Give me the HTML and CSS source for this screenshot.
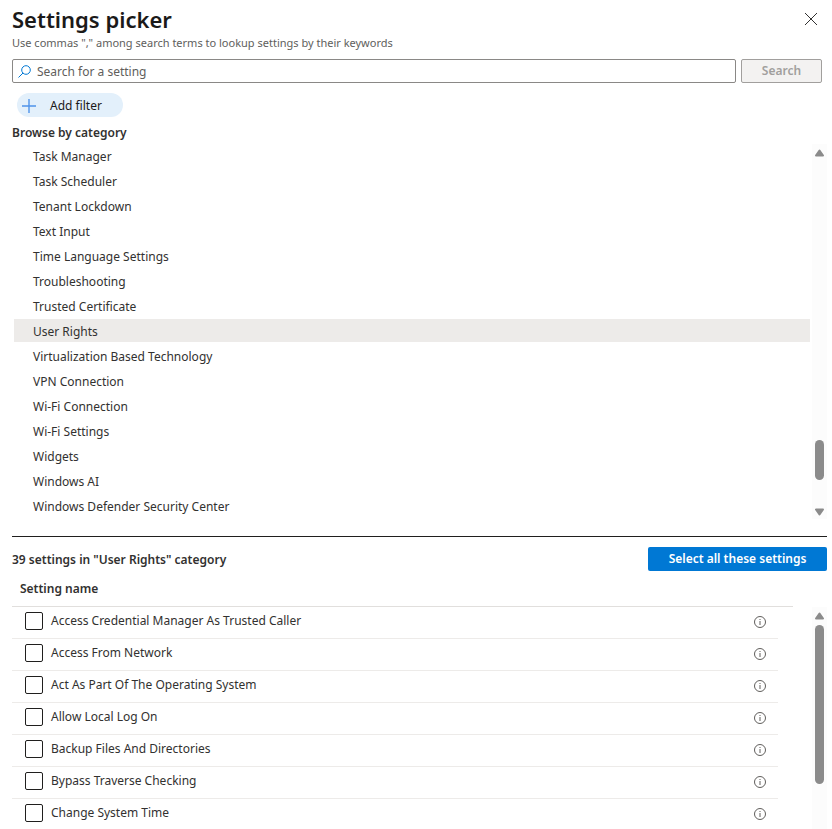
FILE: index.html
```html
<!DOCTYPE html>
<html lang="en">
    <head>
        <title>Settings picker</title>
        <meta charset="utf-8">
        <link rel="stylesheet" href="styles.css">
    </head>
    <body>
        <svg class="sprite" aria-hidden="true">
            <symbol id="info" viewBox="0 0 12 12">
                <circle cx="6" cy="6" r="5.5" fill="none" stroke="#605e5c"/>
                <path d="M5.5 3h1v1h-1zM5.5 5h1v4h-1z" fill="#605e5c"/>
            </symbol>
            <symbol id="arrow" viewBox="0 0 9 7">
                <path d="M4.5 1L8 6H1z" fill="#8b8b8b" stroke="#8b8b8b" stroke-width="2" stroke-linejoin="round"/>
            </symbol>
        </svg>
        <div class="panel">
            <header class="header">
                <h1>Settings picker</h1>
                <button class="close" type="button" aria-label="Close">
                    <svg width="12" height="12" viewBox="0 0 12 12"><path d="M0 0l12 12M12 0L0 12" stroke="#323130" fill="none"/></svg>
                </button>
            </header>
            <p class="hint">Use commas "," among search terms to lookup settings by their keywords</p>
            <form class="search">
                <label class="search-box">
                    <svg width="13" height="13" viewBox="0 0 13 13"><circle cx="8" cy="5" r="4.3"/><path d="M5 8L0.5 12.5"/></svg>
                    <input type="text" placeholder="Search for a setting" aria-label="Search for a setting">
                </label>
                <button class="search-btn" type="button" disabled>Search</button>
            </form>
            <button class="add-filter" type="button">
                <svg width="14" height="14" viewBox="0 0 14 14"><path d="M7 0v14M0 7h14" stroke="#4f93ea" stroke-width="1.4"/></svg>
                Add filter
            </button>
            <h2 class="browse">Browse by category</h2>
            <div class="categories">
                <ul>
                    <li><a href="#">Task Manager</a></li>
                    <li><a href="#">Task Scheduler</a></li>
                    <li><a href="#">Tenant Lockdown</a></li>
                    <li><a href="#">Text Input</a></li>
                    <li><a href="#">Time Language Settings</a></li>
                    <li><a href="#">Troubleshooting</a></li>
                    <li><a href="#">Trusted Certificate</a></li>
                    <li><a href="#" class="current">User Rights</a></li>
                    <li><a href="#">Virtualization Based Technology</a></li>
                    <li><a href="#">VPN Connection</a></li>
                    <li><a href="#">Wi-Fi Connection</a></li>
                    <li><a href="#">Wi-Fi Settings</a></li>
                    <li><a href="#">Widgets</a></li>
                    <li><a href="#">Windows AI</a></li>
                    <li><a href="#">Windows Defender Security Center</a></li>
                </ul>
                <div class="scrollbar">
                    <svg class="arrow"><use href="#arrow"/></svg>
                    <div class="track track-end"><div class="thumb"></div></div>
                    <svg class="arrow down"><use href="#arrow"/></svg>
                </div>
            </div>
            <div class="result-bar">
                <h2>39 settings in "User Rights" category</h2>
                <button class="select-all" type="button">Select all these settings</button>
            </div>
            <div class="results">
                <table>
                    <thead>
                        <tr><th colspan="3">Setting name</th></tr>
                    </thead>
                    <tbody>
                        <tr>
                            <td><label><input type="checkbox">Access Credential Manager As Trusted Caller</label></td>
                            <td class="info"><svg><use href="#info"/></svg></td>
                            <td class="gutter"></td>
                        </tr>
                        <tr>
                            <td><label><input type="checkbox">Access From Network</label></td>
                            <td class="info"><svg><use href="#info"/></svg></td>
                            <td class="gutter"></td>
                        </tr>
                        <tr>
                            <td><label><input type="checkbox">Act As Part Of The Operating System</label></td>
                            <td class="info"><svg><use href="#info"/></svg></td>
                            <td class="gutter"></td>
                        </tr>
                        <tr>
                            <td><label><input type="checkbox">Allow Local Log On</label></td>
                            <td class="info"><svg><use href="#info"/></svg></td>
                            <td class="gutter"></td>
                        </tr>
                        <tr>
                            <td><label><input type="checkbox">Backup Files And Directories</label></td>
                            <td class="info"><svg><use href="#info"/></svg></td>
                            <td class="gutter"></td>
                        </tr>
                        <tr>
                            <td><label><input type="checkbox">Bypass Traverse Checking</label></td>
                            <td class="info"><svg><use href="#info"/></svg></td>
                            <td class="gutter"></td>
                        </tr>
                        <tr>
                            <td><label><input type="checkbox">Change System Time</label></td>
                            <td class="info"><svg><use href="#info"/></svg></td>
                            <td class="gutter"></td>
                        </tr>
                    </tbody>
                </table>
                <div class="scrollbar">
                    <svg class="arrow"><use href="#arrow"/></svg>
                    <div class="track"><div class="thumb thumb-long"></div></div>
                </div>
            </div>
        </div>
    </body>
</html>
```

FILE: styles.css
```css
* {
    margin: 0;
    padding: 0;
    box-sizing: border-box;
}
body {
    font-family: "Segoe UI", "Noto Sans", "Open Sans", sans-serif;
    font-size: 12px;
    line-height: 20px;
    color: #323130;
    background-color: #fff;
}
button, input {
    font: inherit;
    color: inherit;
}
h2 {
    font-size: 12px;
    font-weight: 600;
}
.sprite {
    position: absolute;
    width: 0;
    height: 0;
}
.panel {
    height: 100vh;
    overflow: hidden;
    display: flex;
    flex-direction: column;
    padding: 0 5px 0 12px;
}
.header {
    display: flex;
    justify-content: space-between;
    align-items: center;
    height: 36px;
    padding: 2px 4px 0 0;
}
.header h1 {
    font-size: 22px;
    line-height: 34px;
    font-weight: 600;
    color: #1b1a19;
}
.close {
    display: flex;
    padding: 6px;
    border: none;
    background: none;
}
.hint {
    font-size: 11px;
    line-height: 14px;
    color: #605e5c;
}
/* search row */
.search {
    display: flex;
    gap: 5px;
    margin-top: 9px;
    padding-right: 5px;
}
.search-box {
    flex: 1;
    display: flex;
    align-items: center;
    gap: 6px;
    height: 24px;
    padding: 0 5px;
    border: 1px solid #8a8886;
    border-radius: 2px;
}
.search-box svg {
    fill: none;
    stroke: #0078d4;
}
.search-box input {
    flex: 1;
    padding-top: 2px;
    border: none;
    outline: none;
    background: none;
}
.search-box input::placeholder {
    color: #605e5c;
}
.search-btn {
    width: 81px;
    height: 24px;
    border: 1px solid #a19f9d;
    border-radius: 2px;
    background-color: #f3f2f1;
    color: #a19f9d;
    font-weight: 600;
}
.add-filter {
    align-self: flex-start;
    display: flex;
    align-items: center;
    gap: 14px;
    width: 106px;
    height: 24px;
    margin: 10px 0 0 5px;
    padding: 1px 0 0 5px;
    border: none;
    border-radius: 12px;
    background-color: #e3f0fb;
    color: #1b1a19;
    white-space: nowrap;
}
.browse {
    margin: 6px 0 1px;
}
/* category list */
.categories {
    display: flex;
    gap: 2px;
    padding: 0 0 17px 2px;
    border-bottom: 1px solid #201f1e;
}
.categories ul {
    flex: 1;
    list-style: none;
}
.categories a {
    display: block;
    height: 23px;
    line-height: 26px;
    margin-bottom: 2px;
    padding-left: 19px;
    color: inherit;
    text-decoration: none;
}
.categories .current {
    background-color: #edebe9;
}
.scrollbar {
    display: flex;
    flex-direction: column;
    align-items: center;
    width: 15px;
    padding: 5px 0 3px;
    background-color: #fcfcfc;
}
.arrow {
    flex: none;
    width: 9px;
    height: 8px;
}
.down {
    transform: rotate(180deg);
}
.track {
    flex: 1;
    display: flex;
    flex-direction: column;
    padding-top: 5px;
}
.track-end {
    justify-content: flex-end;
    padding-bottom: 28px;
}
.thumb {
    width: 9px;
    height: 40px;
    border-radius: 5px;
    background-color: #8b8b8b;
}
.thumb-long {
    height: 159px;
}
/* settings of the chosen category */
.result-bar {
    display: flex;
    justify-content: space-between;
    align-items: center;
    margin-top: 10px;
}
.result-bar h2 {
    padding-top: 2px;
}
.select-all {
    width: 179px;
    height: 24px;
    border: none;
    border-radius: 2px;
    background-color: #0078d4;
    color: #fff;
    font-weight: 600;
}
.results {
    flex: 1;
    min-height: 0;
    display: flex;
    align-items: flex-start;
    gap: 19px;
}
.results table {
    flex: 1;
    border-collapse: separate;
    border-spacing: 0;
}
.results th {
    height: 36px;
    padding-left: 8px;
    border-bottom: 1px solid #e1dfdd;
    font-weight: 600;
    text-align: left;
}
.results td {
    height: 32px;
    padding-bottom: 2px;
    border-bottom: 1px solid #edebe9;
}
.results label {
    display: flex;
    align-items: center;
    gap: 8px;
    padding-left: 13px;
    padding-bottom: 2px;
}
.results input {
    appearance: none;
    width: 18px;
    height: 18px;
    border: 1px solid #201f1e;
    border-radius: 2px;
}
.results .info {
    width: 24px;
}
.info svg {
    display: block;
    width: 12px;
    height: 12px;
}
.results .gutter {
    width: 15px;
    border: none;
}
.results .scrollbar {
    align-self: stretch;
    margin-top: 36px;
}
```
